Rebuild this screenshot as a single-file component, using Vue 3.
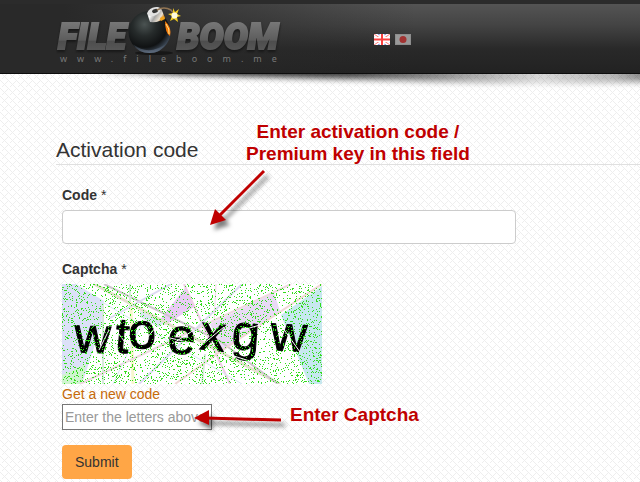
<script setup>
import { ref } from 'vue'

const code = ref('')
const captcha = ref('')
const seed = ref(7)

// Small seeded generator, so that the speckle stays the same between renders.
function speckle(start) {
  let s = start
  const next = () => {
    s = (s * 1664525 + 1013904223) % 4294967296
    return s / 4294967296
  }
  let d = ''
  for (let y = 0; y < 100; y++) {
    for (let x = 0; x < 260; x++) {
      if (next() < 0.125) d += `M${x} ${y}h1v1h-1z`
    }
  }
  return d
}
</script>

<template>
  <div class="page">
    <header class="header">
      <a class="brand" href="#" aria-label="FileBoom">
        <svg class="logo" width="236" height="66" viewBox="0 0 236 66">
          <defs>
            <linearGradient id="metal" x1="0" y1="0" x2="0" y2="1">
              <stop offset="0.1" stop-color="#7a7a7a" />
              <stop offset="0.58" stop-color="#5c5c5c" />
              <stop offset="0.59" stop-color="#4d4d4d" />
              <stop offset="0.9" stop-color="#5a5a5a" />
            </linearGradient>
            <radialGradient id="ball" cx="0.38" cy="0.32" r="0.68">
              <stop offset="0" stop-color="#4b5352" />
              <stop offset="0.4" stop-color="#262b2b" />
              <stop offset="0.8" stop-color="#101213" />
              <stop offset="1" stop-color="#384350" />
            </radialGradient>
            <linearGradient id="rim" x1="0" y1="0" x2="0" y2="1">
              <stop offset="0" stop-color="#68778b" stop-opacity="0" />
              <stop offset="1" stop-color="#68778b" stop-opacity="0.8" />
            </linearGradient>
            <linearGradient id="cap" x1="0" y1="0" x2="1" y2="0.5">
              <stop offset="0" stop-color="#8b8b8b" />
              <stop offset="0.35" stop-color="#ffffff" />
              <stop offset="0.6" stop-color="#a5a5a5" />
              <stop offset="0.85" stop-color="#e8dfd0" />
              <stop offset="1" stop-color="#c97a10" />
            </linearGradient>
          </defs>
          <g class="word">
            <text x="2" y="49">FILE</text>
            <text x="121" y="49">BOOM</text>
          </g>
          <ellipse cx="98" cy="53" rx="19" ry="2" fill="#0c0c0c" opacity="0.6" />
          <circle cx="93.500" cy="32" r="21" fill="url(#ball)" />
          <path d="M77 44Q93 57 111 43Q105 53 93.500 53Q82 53 77 44z" fill="url(#rim)" />
          <path d="M109 21Q116 27 114 36Q109 33 109 21z" fill="#f47a0c" />
          <path d="M110 24Q114 29 113 34" fill="none" stroke="#ffe389" stroke-width="1" />
          <path d="M91 13L105 8L109 18Q103 23 94 22z" fill="url(#cap)" />
          <ellipse cx="98" cy="11.500" rx="7" ry="4" transform="rotate(-22 98 11.5)" fill="#e2e2e2" />
          <ellipse cx="99" cy="11" rx="3" ry="2" transform="rotate(-22 99 11)" fill="#343434" />
          <path d="M104 18l4-2l1 3l-4 2z" fill="#f0a21b" />
          <path d="M101 10Q108 6 115 10L118 14" fill="none" stroke="#927553" stroke-width="1.500" />
          <path d="M117 8l2 4l4-3l-2 5l4 2l-4 1l1 5l-4-3l-4 2l2-5l-4-2l5-1z" fill="#f5cf20" />
          <circle cx="118.500" cy="15.500" r="3" fill="#fffce0" />
          <text class="domain" x="4" y="62">www.fileboom.me</text>
        </svg>
      </a>
      <nav class="flags" aria-label="Language">
        <a href="#" aria-label="English">
          <svg width="16" height="11" viewBox="0 0 16 11">
            <path d="M0 0h16v11H0z" fill="#6673d8" />
            <path d="M0 0L16 11M16 0L0 11" stroke="#fff" stroke-width="4" />
            <path d="M0 0L16 11M16 0L0 11" stroke="#ff7777" stroke-width="1" />
            <path d="M8 0v11M0 5.500h16" stroke="#fff" stroke-width="5" />
            <path d="M8 0v11M0 5.500h16" stroke="#fb4040" stroke-width="2" />
          </svg>
        </a>
        <a href="#" aria-label="Japanese">
          <svg width="16" height="11" viewBox="0 0 16 11">
            <path d="M0 0h16v11H0z" fill="#8d8d8d" />
            <path d="M1 1h14v9H1z" fill="#999" />
            <circle cx="8" cy="5.500" r="3.500" fill="#a13332" />
          </svg>
        </a>
      </nav>
    </header>
    <div class="shade">
      <svg width="100%" height="18" viewBox="0 0 640 18" preserveAspectRatio="none">
        <defs>
          <linearGradient id="fade" x1="0" x2="1" y1="0" y2="0">
            <stop offset="0.05" stop-color="#000" stop-opacity="0" />
            <stop offset="0.2" stop-color="#000" stop-opacity="0.9" />
            <stop offset="0.48" stop-color="#000" stop-opacity="0.75" />
            <stop offset="0.68" stop-color="#000" stop-opacity="0.35" />
            <stop offset="0.8" stop-color="#000" stop-opacity="0.15" />
            <stop offset="0.92" stop-color="#000" stop-opacity="0.28" />
            <stop offset="1" stop-color="#000" stop-opacity="0.55" />
          </linearGradient>
          <filter id="soft" x="-5%" y="-100%" width="110%" height="300%">
            <feGaussianBlur stdDeviation="3" />
          </filter>
        </defs>
        <path d="M60 -10H660V7Q540 12 400 6Q240 2 60 -2z" fill="url(#fade)" filter="url(#soft)" />
      </svg>
    </div>

    <main class="content">
      <h1>Activation code</h1>
      <form class="form" @submit.prevent>
        <label for="code">Code <span>*</span></label>
        <input id="code" v-model="code" class="code" type="text" />
        <label for="captcha">Captcha <span>*</span></label>
        <svg class="captcha" width="260" height="100" viewBox="0 0 260 100" role="img">
          <path d="M0 0h260v100H0z" fill="#fff" />
          <path d="M0 0H14L42 17L39 42L20 100H0z" fill="#dce1f8" />
          <path d="M0 91L24 80L20 100H0z" fill="#d0f4d0" />
          <path d="M260 2L219 31L247 100H260z" fill="#c7e8ef" />
          <path d="M123 4L132 23L103 41L97 37z" fill="#eacbf6" />
          <path d="M148 40L212 9L218 27L161 67z" fill="#e9daf5" />
          <path d="M78 27L106 37L96 43L78 33z" fill="#dce5f3" />
          <g fill="none" stroke-width="2">
            <path d="M32 0L218 100" stroke="#e5e0cf" stroke-width="3" />
            <path d="M42 0L158 57L216 100" stroke="#cfc5cd" />
            <path d="M68 0V25M41 20V100M143 70L140 100" stroke="#d7eadb" />
            <path d="M69 18L71 100" stroke="#f8f7cd" stroke-width="3" />
            <path d="M122 0L168 100" stroke="#f0cce6" />
            <path d="M260 0L162 65L113 100" stroke="#f0d8d5" />
            <path d="M229 0L134 45L18 100" stroke="#eed8e0" />
            <path d="M180 0L77 100M109 0L48 34" stroke="#dedaf3" />
            <path d="M40 18L180 100M80 39L51 100" stroke="#d8e9f5" stroke-width="1" />
            <path d="M154 0L151 58" stroke="#f3dae8" stroke-width="1" />
          </g>
          <g class="letters">
            <text x="12" y="68" transform="rotate(2 12 68)">w</text>
            <text x="52" y="68" transform="rotate(5 52 68)">t</text>
            <text x="67" y="65" transform="rotate(-3 67 65)">o</text>
            <text x="105" y="69" transform="rotate(3 105 69)">e</text>
            <text x="137" y="65" transform="rotate(6 137 65)">x</text>
            <text x="169" y="65" transform="rotate(4 169 65)">g</text>
            <text x="208" y="66" transform="rotate(3 208 66)">w</text>
          </g>
          <g fill="none" stroke="#fff" stroke-width="1">
            <path d="M37 66L47 46M51 42L65 61M80 60L94 43M110 60L132 46M108 54L134 60M141 60L162 43M218 40L238 68M177 47L198 41M172 72L197 80" />
          </g>
          <path :d="speckle(seed)" fill="#32dc1c" shape-rendering="crispEdges" />
        </svg>
        <a class="renew" href="#" @click.prevent="seed += 1">Get a new code</a>
        <input id="captcha" v-model="captcha" class="letters-box" type="text" placeholder="Enter the letters above" />
        <button type="submit">Submit</button>
      </form>
    </main>

    <p class="note note-code">Enter activation code /<br />Premium key in this field</p>
    <svg class="arrow arrow-code" width="70" height="70" viewBox="0 0 70 70" aria-hidden="true">
      <path d="M59 6L14 51" />
      <path class="head" d="M5 60L10 44L21 55z" />
    </svg>
    <p class="note note-captcha">Enter Captcha</p>
    <svg class="arrow arrow-captcha" width="100" height="34" viewBox="0 0 100 34" aria-hidden="true">
      <path d="M14 13L91 15" />
      <path class="head" d="M4 13L19 5V20z" />
    </svg>
  </div>
</template>

<style>
body {
  background: #fff;
}
</style>

<style scoped>
.page {
  position: relative;
  min-height: 100vh;
  overflow: hidden;
  color: #333;
  font: 14px/20px "Liberation Sans", Arial, sans-serif;
  background: #fff url("data:image/svg+xml,%3Csvg xmlns='http://www.w3.org/2000/svg' width='8' height='8' shape-rendering='crispEdges'%3E%3Cpath fill='%23eeeeee' d='M0 0h1v1H0zM1 1h1v1H1zM2 2h1v1H2zM3 3h1v1H3zM4 4h1v1H4zM5 5h1v1H5zM6 6h1v1H6zM7 7h1v1H7zM5 3h1v1H5zM6 2h1v1H6zM7 1h1v1H7zM3 5h1v1H3zM2 6h1v1H2z'/%3E%3C/svg%3E");
}
.header {
  display: flex;
  align-items: flex-start;
  gap: 82px;
  box-sizing: border-box;
  height: 74px;
  padding-left: 56px;
  border-top: 4px solid #2b2b2b;
  border-bottom: 1px solid #0d0d0d;
  background:
    linear-gradient(90deg, #292929 10%, rgba(41, 41, 41, 0) 65%),
    linear-gradient(#545454, #444 30%, #292929 65%, #222);
}
.brand {
  display: block;
  height: 66px;
}
.logo {
  display: block;
  margin-top: -4px;
}
.word {
  font: italic 900 36px Roboto, "Liberation Sans", sans-serif;
  fill: url(#metal);
  stroke: url(#metal);
  stroke-width: 2px;
  filter: drop-shadow(0 2px 1px #181818);
}
.domain {
  font: 9px "Noto Sans", sans-serif;
  letter-spacing: 10px;
  fill: #777;
}
.flags {
  display: flex;
  gap: 5px;
  padding-top: 30px;
}
.flags svg {
  display: block;
}
.shade {
  height: 18px;
  overflow: hidden;
}
.shade svg {
  display: block;
}
.content {
  padding: 44px 0 0 56px;
}
h1 {
  margin: 0 0 20px;
  padding-bottom: 1px;
  border-bottom: 1px solid #e0e0e0;
  font-size: 21px;
  font-weight: normal;
  line-height: 27px;
}
.form {
  display: flex;
  flex-direction: column;
  align-items: flex-start;
  padding: 0 6px;
}
label {
  margin-bottom: 5px;
  font-weight: bold;
}
label span {
  font-weight: normal;
}
input {
  box-sizing: border-box;
  font: inherit;
  color: #555;
  background: #fff;
}
.code {
  width: 100%;
  max-width: 454px;
  height: 34px;
  margin-bottom: 15px;
  padding: 6px 12px;
  border: 1px solid #ccc;
  border-radius: 4px;
}
.captcha {
  display: block;
}
.letters {
  font: 50px "Liberation Sans", Arial, sans-serif;
  stroke: #000;
  stroke-width: 1px;
}
.renew {
  color: #c66a09;
  text-decoration: none;
}
.letters-box {
  width: 150px;
  height: 26px;
  margin-bottom: 15px;
  padding: 1px 2px;
  border: 1px solid #767676;
}
.letters-box::placeholder {
  color: #999;
}
button {
  height: 34px;
  padding: 6px 13px;
  border: 0;
  border-radius: 4px;
  color: #333;
  font: inherit;
  background: #ffa646;
}
.note {
  position: absolute;
  margin: 0;
  color: #c00000;
  font-size: 19px;
  font-weight: bold;
  line-height: 22px;
  text-align: center;
  white-space: nowrap;
}
.note-code {
  top: 121px;
  left: 246px;
}
.note-captcha {
  top: 404px;
  left: 290px;
}
.arrow {
  position: absolute;
  pointer-events: none;
  fill: none;
  stroke: #c00000;
  stroke-width: 3px;
  filter: drop-shadow(4px 5px 2px rgba(0, 0, 0, 0.5));
}
.head {
  fill: #c00000;
  stroke: none;
}
.arrow-code {
  top: 165px;
  left: 205px;
}
.arrow-captcha {
  top: 405px;
  left: 190px;
}
</style>
